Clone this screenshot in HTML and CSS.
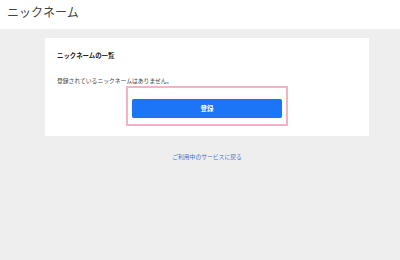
FILE: index.html
```html
<!DOCTYPE html>
<html lang="ja">
<head>
  <meta charset="UTF-8" />
  <title>ニックネーム</title>
  <link rel="stylesheet" href="styles.css">
</head>
<body>

  <header class="top-bar">
    <h1>ニックネーム</h1>
  </header>

  <main class="content">
    <section class="card">
      <h2>ニックネームの一覧</h2>
      <p class="empty">登録されているニックネームはありません。</p>
      <div class="action">
        <div class="highlight">
          <button type="button">登録</button>
        </div>
      </div>
    </section>

    <a class="back" href="#">ご利用中のサービスに戻る</a>
  </main>

</body>
</html>
```

FILE: styles.css
```css
body {
  margin: 0;
  font-family: "Noto Sans CJK JP", "Noto Sans", sans-serif;
  background-color: #eeeeee;
  color: #333;
}

.top-bar {
  background-color: white;
  height: 29px;
  padding: 0 7px;
}

.top-bar h1 {
  margin: 0;
  font-size: 12px;
  font-weight: normal;
  line-height: 24px;
  color: #444;
}

.content {
  padding: 9px 31px 0 45px;
  text-align: center;
}

.card {
  background-color: white;
  height: 98px;
  padding: 0 12px;
  box-sizing: border-box;
  text-align: left;
  overflow: hidden;
}

.card h2 {
  margin: 13px 0 0;
  font-size: 6.4px;
  font-weight: bold;
  line-height: 9px;
  color: #222;
}

.empty {
  margin: 17px 0 0;
  font-size: 5.8px;
  line-height: 8px;
  color: #444;
}

.action {
  display: flex;
  justify-content: center;
  margin-top: 1px;
}

.highlight {
  border: 2.5px solid #f2b3c9;
  padding: 4px 4px 6px;
}

button {
  width: 150px;
  height: 19px;
  padding: 0;
  background-color: #1c74f6;
  color: white;
  border: none;
  border-radius: 2px;
  font-family: inherit;
  font-size: 6.4px;
  font-weight: bold;
  box-shadow: 0 0 1px rgba(0,0,0,0.3);
}

.back {
  display: inline-block;
  margin-top: 16px;
  font-size: 5.8px;
  color: #3d75c9;
  text-decoration: none;
}
```
